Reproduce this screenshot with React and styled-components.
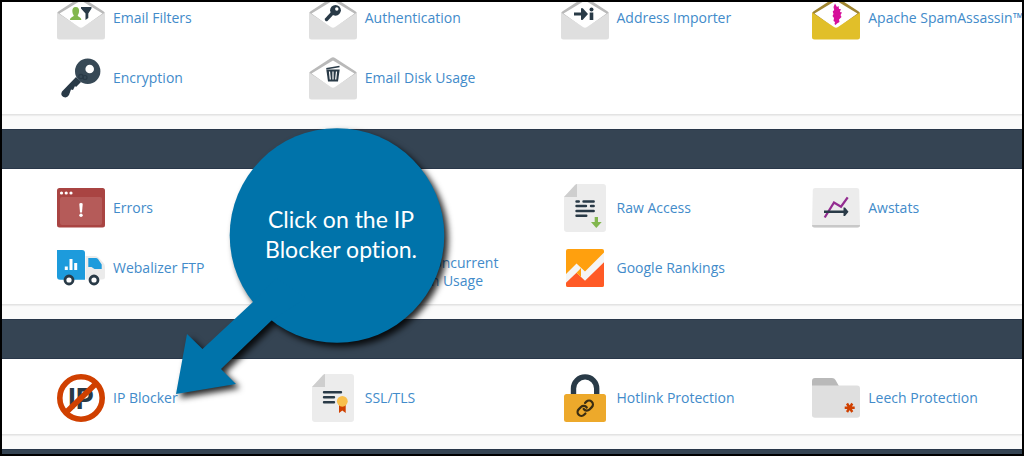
import React from 'react';
import styled, { createGlobalStyle } from "styled-components"

const dark = "#293a47"
const red = "#d04000"

const Icon = styled.svg`
display:block;
flex:none;
width:48px;
height:48px;
`

function Envelope({ body = "#dfdfdf", flap = "#b9b9b9", children }) {
    return (
        <Icon viewBox="0 0 48 48">
            <path d="M0 20 Q0 18 2 17 L22 4 Q24 2.5 26 4 L46 17 Q48 18 48 20 L24 34 Z" fill={flap} />
            <path d="M2.5 19.5 L24 6.5 L45.5 19.5 L24 35 Z" fill="#fff" />
            <path d="M0 18.5 L22 33 Q24 34.5 26 33 L48 18.5 V43 Q48 45.5 45.5 45.5 H2.5 Q0 45.5 0 43 Z" fill={body} />
            {children}
        </Icon>
    )
}

function Doc({ children }) {
    return (
        <Icon viewBox="0 0 48 48">
            <path d="M16 0 H42 Q45 0 45 3 V45 Q45 48 42 48 H6 Q3 48 3 45 V13 Z" fill="#ececec" />
            <path d="M3 13 L14 1 Q15 0 16 0 V13 Z" fill="#cecece" />
            {children}
        </Icon>
    )
}

const icons = {
    filters: (
        <Envelope>
            <path d="M18.7 13 C21.5 13 22.5 15 22 18 C21.7 20 21 20.5 20.7 21.5 C21 23 24.3 23 24.3 26 H13 C13 23 16.5 23 16.8 21.5 C16.3 20.5 15.7 20 15.4 18 C15 15 16 13 18.7 13 Z" fill="#82b74e" />
            <path d="M24 13 H34.5 V14.5 L31.3 19.5 V24 L28.5 26 V19.5 L24 14.5 Z" fill={dark} />
        </Envelope>
    ),
    auth: (
        <Envelope>
            <path d="M17.5 25.5 L24 18.5" stroke={dark} strokeWidth="3.4" strokeLinecap="round" />
            <circle cx="26.5" cy="16.3" r="5.4" fill={dark} />
            <circle cx="27.8" cy="15" r="1.7" fill="#fff" />
        </Envelope>
    ),
    importer: (
        <Envelope>
            <path d="M13 18.5 H20 V14.5 Q21 13.5 22 14.5 L27 20 L22 25.5 Q21 26.5 20 25.5 V21.5 H13 Z" fill={dark} />
            <circle cx="30.5" cy="15.5" r="2" fill={dark} />
            <path d="M28.7 18.5 H32.3 V26 H28.7 Z" fill={dark} />
        </Envelope>
    ),
    spam: (
        <Envelope body="#e1bf29" flap="#a08530">
            <path d="M23 9.5 L25 13 L26.5 12 L27 15 L28.8 15 L28 18 L30 18.5 L28.5 21 L29.5 23 L27 25.5 L27.5 28 L25 29.5 L23.5 31 L22.5 30 L23 28 L21.5 27 L22 24 L20.5 22 L21.5 20 L20.7 17.5 L22.2 16 L21.5 13 Z" fill="#d6109a" />
        </Envelope>
    ),
    key: (
        <Icon viewBox="0 0 48 48">
            <path d="M19 23 L24 28 L19 33 L18 32 L16 36 L14 35.5 L12 41 Q10 44.5 6.5 43 Q3 41 5 37.5 Z" fill={dark} />
            <path fillRule="evenodd" d="M30.7 4.5 a12.7 12.7 0 1 1 0 25.4 a12.7 12.7 0 1 1 0 -25.4 Z M32.7 10.7 a4.3 4.3 0 1 0 0 8.6 a4.3 4.3 0 1 0 0 -8.6 Z" fill="#374956" />
            <circle cx="24" cy="22.5" r="2.2" fill="none" stroke={dark} strokeWidth="1.2" />
            <circle cx="28" cy="23.5" r="2" fill="none" stroke={dark} strokeWidth="1.2" />
        </Icon>
    ),
    trash: (
        <Envelope>
            <path d="M17.3 14.7 L30.5 12.5" stroke={dark} strokeWidth="1.6" />
            <path d="M17.3 15.5 H30.7 L29 27.5 H19 Z" fill={dark} />
            <path d="M20.5 17.5 L21.3 25.5 M24 17.5 V25.5 M27.5 17.5 L26.7 25.5" stroke="#fff" strokeWidth="1.2" />
        </Envelope>
    ),
    errors: (
        <Icon viewBox="0 0 48 48">
            <rect y="4" width="48" height="39.5" rx="2.5" fill="#a94442" />
            <rect x="3" y="13" width="42" height="28" rx="2" fill="#b55b59" />
            <g fill="#fff">
                <circle cx="4.5" cy="9" r="1.6" />
                <circle cx="9.2" cy="9" r="1.6" />
                <circle cx="14" cy="9" r="1.6" />
                <path d="M22.3 20 Q22.3 19 24 19 Q25.7 19 25.7 20 L25 28.5 H23 Z" />
                <circle cx="24" cy="31.3" r="1.7" />
            </g>
        </Icon>
    ),
    truck: (
        <Icon viewBox="0 0 48 48">
            <path d="M28.5 12 H38 Q40 12 41.5 13.5 L46.5 19 Q48 20.5 48 23 V33 Q48 35.5 45 35.5 H28.5 Z" fill="#ebebeb" />
            <path d="M0 6 H25 Q28 6 28 9 V35.7 H3 Q0 35.7 0 32.5 Z" fill="#1d9bdc" />
            <path d="M31.3 14 H39 Q40 14 41 15 L44.7 20.5 V25 H37.5 L34.5 23 H31.3 Z" fill="#1d9bdc" />
            <path d="M9.3 22.5 V26 M14 15 V26 M18.7 19 V26" stroke="#fff" strokeWidth="3" />
            <circle cx="12" cy="36" r="4" fill="#fff" stroke={dark} strokeWidth="2.8" />
            <circle cx="37" cy="36" r="4" fill="#fff" stroke={dark} strokeWidth="2.8" />
        </Icon>
    ),
    raw: (
        <Doc>
            <path d="M15.5 17.5 H17.8 M22.5 17.5 H32.7 M15.5 22 H25 M30 22 H32.7 M15.5 27 H32.7 M15.5 31.7 H25.3" stroke={dark} strokeWidth="2.4" strokeLinecap="round" />
            <path d="M33.7 33 H37 V38 H40.7 L35.3 44 L30 38 H33.7 Z" fill="#82b74e" />
        </Doc>
    ),
    rankings: (
        <Icon viewBox="0 0 48 48">
            <rect x="5" y="5" width="38" height="38" rx="2" fill="#ffa00e" />
            <path d="M5 34 L15.5 24 L24 32 L43 13 V41 Q43 43 41 43 H7 Q5 43 5 41 Z" fill="#ff5a26" />
            <path d="M5 30 L15.5 19.5 L24 27.5 L43 8.5 V18.3 L24 36.7 L15.5 28.7 L5 38.7 Z" fill="#f5f5f5" />
            <path d="M15.5 28.7 L20 24 V33 Z" fill="#ffa00e" />
        </Icon>
    ),
    awstats: (
        <Icon viewBox="0 0 48 48">
            <path d="M3 4 H45 Q47 4 47.2 6 L48 41 Q48 43.5 45.5 43.5 H2.5 Q0 43.5 0 41 L0.8 6 Q1 4 3 4 Z" fill="#ececec" />
            <path d="M0 41 H48 Q48 43.5 45.5 43.5 H2.5 Q0 43.5 0 41 Z" fill="#c8c8c8" />
            <path d="M12.7 33.5 L22 18.5 L29 22.7 L35.7 13.3" fill="none" stroke="#932c90" strokeWidth="2.3" />
            <path d="M12 26.5 H31.5 V23.5 H33 L36.5 27.7 L33 32 H31.5 V29 H12 Z" fill={dark} />
        </Icon>
    ),
    ip: (
        <Icon viewBox="0 0 48 48">
            <text x="11" y="35" fontFamily="Inter, sans-serif" fontWeight="700" fontSize="28" fill={dark}>IP</text>
            <circle cx="24" cy="24" r="21.2" fill="none" stroke={red} strokeWidth="5.6" />
            <path d="M9 38.5 L39 9.5" stroke={red} strokeWidth="5.8" />
        </Icon>
    ),
    ssl: (
        <Doc>
            <path d="M15 18.3 H32 M15 23.3 H25 M15 28.2 H25" stroke={dark} strokeWidth="2.4" strokeLinecap="round" />
            <path d="M30 31 H36.7 V39 L33.3 36.5 L30 39 Z" fill={red} />
            <circle cx="33.3" cy="27.3" r="5.4" fill="#f8bf4c" />
        </Doc>
    ),
    lock: (
        <Icon viewBox="0 0 48 48">
            <path d="M12.5 21 V14.5 A11.6 11.6 0 0 1 35.7 14.5 V21" fill="none" stroke={dark} strokeWidth="5.4" />
            <rect x="3" y="20" width="42" height="28" rx="2.5" fill="#eda92b" />
            <g transform="translate(15 25) scale(0.77)" fill="none" stroke="#3a2d12" strokeWidth="2.9" strokeLinecap="round">
                <path d="M10 13a5 5 0 0 0 7.54.54l3-3a5 5 0 0 0-7.07-7.07l-1.72 1.71" />
                <path d="M14 11a5 5 0 0 0-7.54-.54l-3 3a5 5 0 0 0 7.07 7.07l1.71-1.71" />
            </g>
        </Icon>
    ),
    folder: (
        <Icon viewBox="0 0 48 48">
            <path d="M0 14 V7 Q0 4 3 4 H20 Q22.5 4 23.5 6 L28 14 Z" fill="#b9b9b9" />
            <path d="M0 11.5 H45 Q48 11.5 48 14.5 V41 Q48 43.7 45 43.7 H3 Q0 43.7 0 41 Z" fill="#dfdfdf" />
            <path d="M32.7 33.7 H42.7 M35 29.5 L40.3 38 M40.3 29.5 L35 38" stroke={red} strokeWidth="2.4" />
        </Icon>
    ),
}

const email = [
    { icon: "filters", name: "Email Filters" },
    { icon: "auth", name: "Authentication" },
    { icon: "importer", name: "Address Importer" },
    { icon: "spam", name: "Apache SpamAssassin™" },
    { icon: "key", name: "Encryption" },
    { icon: "trash", name: "Email Disk Usage" },
]

const metrics = [
    { icon: "errors", name: "Errors" },
    null,
    { icon: "raw", name: "Raw Access" },
    { icon: "awstats", name: "Awstats" },
    { icon: "truck", name: "Webalizer FTP" },
    { name: "CPU and Concurrent Connection Usage", wrap: true },
    { icon: "rankings", name: "Google Rankings" },
]

const security = [
    { icon: "ip", name: "IP Blocker" },
    { icon: "ssl", name: "SSL/TLS" },
    { icon: "lock", name: "Hotlink Protection" },
    { icon: "folder", name: "Leech Protection" },
]

function Panel({ items, scrolled }) {
    return (
        <Section $scrolled={scrolled}>
            {!scrolled && <Heading />}
            {items && <List $scrolled={scrolled}>
                {items.map((item, index) => <li key={index}>
                    {item && <ItemLink href="#">
                        {icons[item.icon] || <Icon />}
                        <Name $wrap={item.wrap}>{item.name}</Name>
                    </ItemLink>}
                </li>)}
            </List>}
        </Section>
    )
}

function App() {
    return (
        <Frame>
            <GlobalStyle />
            <Panel items={email} scrolled />
            <Panel items={metrics} />
            <Panel items={security} />
            <Panel />
            <Callout>
                <Bubble viewBox="0 0 269 268" fill="#0073aa">
                    <circle cx="161" cy="107.5" r="107.3" />
                    <path d="M100 150 L77.5 173.5 L26.5 221 L11 206 L0 266 L60 256 L45 241 L95.5 192.5 L130 170 Z" />
                </Bubble>
                <CalloutText>Click on the IP<br />Blocker option.</CalloutText>
            </Callout>
        </Frame>
    )
}

export default App

const GlobalStyle = createGlobalStyle`
*{
    box-sizing:border-box;
}
body{
    margin:0;
    background:#fafafa;
    font-family:"Open Sans","Noto Sans",sans-serif;
}
`
const Frame = styled.main`
position:relative;
height:100vh;
overflow:hidden;
border:2px solid #000;
`
const Section = styled.section`
background:#fff;
border-bottom:1px solid #e3e3e3;
box-shadow:0 1px 1px rgba(0,0,0,0.05);
margin-bottom:14px;
margin-top:${props => props.$scrolled ? '-14px' : '0'};
`
const Heading = styled.header`
height:40px;
background:#354453;
border-top:1px solid #293749;
border-bottom:1px solid #293749;
`
const List = styled.ul`
display:grid;
grid-template-columns:repeat(4,minmax(0,1fr));
grid-auto-rows:60px;
list-style:none;
margin:0;
padding:${props => props.$scrolled ? '0 1px 6px 12px' : '9px 1px 6px 12px'};
`
const ItemLink = styled.a`
display:flex;
align-items:center;
gap:8px;
height:100%;
padding-left:43px;
color:#428bca;
font-size:14px;
line-height:18px;
text-decoration:none;
&:hover{
    text-decoration:underline;
}
`
const Name = styled.span`
white-space:${props => props.$wrap ? 'normal' : 'nowrap'};
padding-top:${props => props.$wrap ? '8px' : '0'};
`
const Callout = styled.aside`
position:absolute;
top:126px;
left:174px;
display:grid;
width:269px;
`
const Bubble = styled.svg`
grid-area:1/1;
width:100%;
overflow:visible;
filter:drop-shadow(4px 4px 3px rgba(0,0,0,0.85));
`
const CalloutText = styled.p`
grid-area:1/1;
justify-self:end;
position:relative;
width:208px;
margin:0;
padding-top:76px;
color:#fff;
font-family:Lato,"Open Sans",sans-serif;
font-size:23px;
font-variant-ligatures:none;
line-height:30px;
text-align:center;
`
